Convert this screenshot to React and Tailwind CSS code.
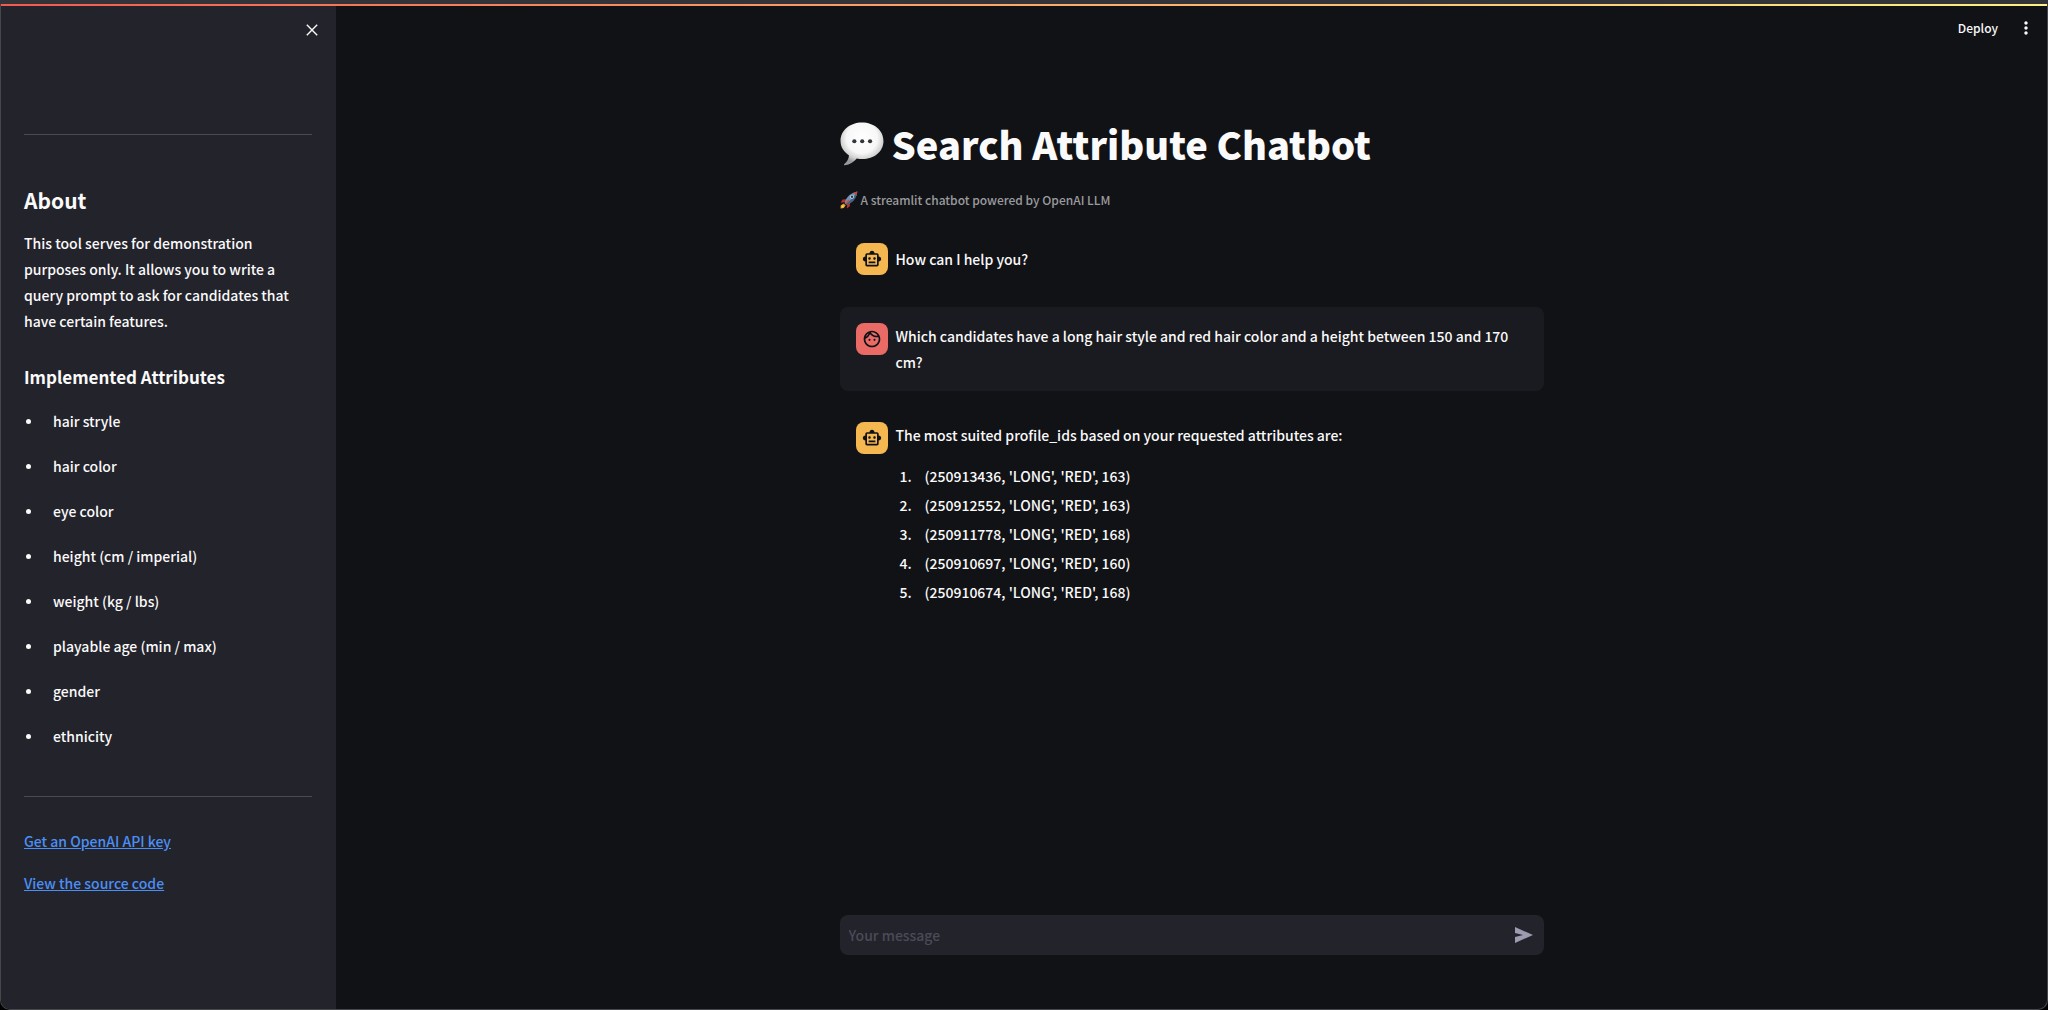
import { MdOutlineSmartToy, MdOutlineFace, MdMoreVert } from "react-icons/md";

const attributes = [
  "hair stryle",
  "hair color",
  "eye color",
  "height (cm / imperial)",
  "weight (kg / lbs)",
  "playable age (min / max)",
  "gender",
  "ethnicity",
];

const results = [
  "(250913436, 'LONG', 'RED', 163)",
  "(250912552, 'LONG', 'RED', 163)",
  "(250911778, 'LONG', 'RED', 168)",
  "(250910697, 'LONG', 'RED', 160)",
  "(250910674, 'LONG', 'RED', 168)",
];

function SpeechBubble() {
  return (
    <svg viewBox="0 0 42 44" preserveAspectRatio="none" className="size-11 shrink-0" aria-hidden="true">
      <defs>
        <radialGradient id="bubble" cx="0.5" cy="0.36" r="0.6">
          <stop offset="0" stopColor="#ffffff" />
          <stop offset="0.6" stopColor="#f7f7f7" />
          <stop offset="0.84" stopColor="#d0d0d0" />
          <stop offset="1" stopColor="#9a9a9a" />
        </radialGradient>
      </defs>
      <path
        d="M21 0.5C32.5 0.5 41.5 8.300 41.500 19C41.500 29.700 32.500 37 21.500 37C19.500 37 17.800 36.800 16 36.400C13 39.800 9.500 42.600 4.600 43.300C3.700 43.400 3.500 42.600 4.200 42C6.700 39.800 8.300 36.800 8.600 33.400C3.800 30 0.500 25.300 0.500 19C0.500 8.300 9.500 0.500 21 0.500Z"
        fill="url(#bubble)"
      />
      <g fill="#333639">
        <circle cx="13.700" cy="19.200" r="2" />
        <circle cx="21.200" cy="19.200" r="2" />
        <circle cx="28.700" cy="19.200" r="2" />
      </g>
    </svg>
  );
}

function Rocket() {
  return (
    <svg viewBox="0 0 18 18" className="size-[18px] shrink-0" aria-hidden="true">
      <path d="M6.500 8.200L2.600 8.400L0.600 11.800L4.700 11Z" fill="#b8322c" />
      <path d="M9.800 11.300L9.900 15.300L6.800 17.500L7.200 13.200Z" fill="#b8322c" />
      <path d="M3.600 12.600L0.700 14.400L0.600 17.500L3.800 17L5.600 14.400Z" fill="#e9a52b" />
      <path d="M3.400 14L1.700 15.200L1.600 16.500L3.200 16.100Z" fill="#fbe36b" />
      <path d="M4.500 12C5.500 7.500 10 1.800 17.300 0.600C17 7.500 11.500 12.300 6.800 13.800Z" fill="#6f93b5" />
      <path d="M5.500 13C9 10.500 14.500 6.500 17.300 0.600C17 7.500 11.500 12.300 6.800 13.800Z" fill="#42607f" />
      <path d="M13.600 1.800C14.800 1.200 16 0.800 17.300 0.600C17.300 1.900 17 3.200 16.500 4.400Z" fill="#c5443c" />
      <circle cx="12" cy="5.800" r="1.900" fill="#d9e2ea" />
      <circle cx="12" cy="5.800" r="1.200" fill="#26384a" />
      <path d="M8.500 8.600L9.500 9.500L5.500 13.400L4.800 12.700Z" fill="#d8493f" />
    </svg>
  );
}

function Assistant({ children }) {
  return (
    <div className="flex size-8 shrink-0 items-center justify-center rounded-lg bg-[#f5b74f] text-[#0e1117]">
      {children}
    </div>
  );
}

export default function App() {
  return (
    <div className="flex min-h-screen flex-col bg-black font-['Noto_Sans_CJK_JP',sans-serif] text-[14px] leading-[26px] font-medium text-[#fafafa]">
      <div className="h-1 bg-[#33343a]" />
      <div className="flex grow flex-col overflow-hidden rounded-b-[10px] border-x border-b border-[#46474c] bg-[#111216]">
        <div className="-mx-px h-0.5 bg-linear-to-r from-[#f15a50] to-[#fbf184]" />
        <div className="flex grow">
          <aside className="flex w-[335px] shrink-0 flex-col bg-[#23232b] pr-6 pl-[23px]">
            <div className="-mr-2 flex h-12 items-center justify-end">
              <button aria-label="Close sidebar" className="flex size-4 items-center justify-center">
                <svg viewBox="0 0 12 12" className="size-3" aria-hidden="true">
                  <path d="M0.800 0.800L11.200 11.200M11.200 0.800L0.800 11.200" stroke="currentColor" strokeWidth="1.400" />
                </svg>
              </button>
            </div>
            <hr className="mt-20 border-[#4b4b51]" />
            <h2 className="mt-[47px] text-[21px] leading-9 font-bold">About</h2>
            <p className="mt-3">
              This tool serves for demonstration purposes only. It allows you to write a query prompt to ask for
              candidates that have certain features.
            </p>
            <h3 className="mt-[27px] text-[17px] leading-8 font-bold">Implemented Attributes</h3>
            <ul className="mt-[15px] flex flex-col gap-[19px]">
              {attributes.map((name) => (
                <li key={name} className="flex items-center gap-[22px] pl-0.5">
                  <span className="size-[5px] rounded-full bg-[#fafafa]" />
                  {name}
                </li>
              ))}
            </ul>
            <hr className="mt-[47px] border-[#4b4b51]" />
            <nav className="mt-[31px] flex flex-col items-start gap-4 text-[#4b8ff5]">
              <a href="#key" className="underline">Get an OpenAI API key</a>
              <a href="#source" className="underline">View the source code</a>
            </nav>
          </aside>
          <div className="flex grow flex-col">
            <header className="flex h-11 items-center justify-end gap-[18px] pr-[11px] text-[12px]">
              <button>Deploy</button>
              <button aria-label="Menu">
                <MdMoreVert className="size-5" />
              </button>
            </header>
            <main className="mx-auto flex w-full max-w-[704px] grow flex-col">
              <h1 className="mt-[68px] flex h-[52px] items-center gap-2 text-[38px] leading-[52px] font-black">
                <SpeechBubble />
                Search Attribute Chatbot
              </h1>
              <p className="mt-[17px] flex items-center gap-[3px] text-[12px] text-[#9a9b9e]">
                <Rocket />
                A streamlit chatbot powered by OpenAI LLM
              </p>
              <section className="mt-[14px] flex flex-col gap-4">
                <article className="flex items-center gap-2 p-4">
                  <Assistant>
                    <MdOutlineSmartToy className="size-5" />
                  </Assistant>
                  <p>How can I help you?</p>
                </article>
                <article className="flex gap-2 rounded-lg bg-[#1a1b20] p-4">
                  <div className="flex size-8 shrink-0 items-center justify-center rounded-lg bg-[#ea6b66] text-[#0e1117]">
                    <MdOutlineFace className="size-5" />
                  </div>
                  <p>
                    Which candidates have a long hair style and red hair color and a height between 150 and 170 cm?
                  </p>
                </article>
                <article className="flex gap-2 px-4 pt-[15px]">
                  <Assistant>
                    <MdOutlineSmartToy className="size-5" />
                  </Assistant>
                  <div>
                    <p>The most suited profile_ids based on your requested attributes are:</p>
                    <ol className="mt-[15px] flex flex-col gap-[3px]">
                      {results.map((row, i) => (
                        <li key={row} className="flex">
                          <span className="w-[29px] pl-1">{i + 1}.</span>
                          {row}
                        </li>
                      ))}
                    </ol>
                  </div>
                </article>
              </section>
              <form className="mt-auto mb-[54px] flex h-10 items-center rounded-lg bg-[#23232b] pr-2 pl-[9px]">
                <input
                  type="text"
                  aria-label="Your message"
                  placeholder="Your message"
                  className="min-w-0 grow bg-transparent outline-none placeholder:text-[#4a4b57]"
                />
                <button type="button" aria-label="Send" className="flex size-6 items-center justify-center text-[#9b9caf]">
                  <svg viewBox="0 0 18 16" className="h-4 w-[18px]" aria-hidden="true">
                    <path d="M0 0L18 8L0 16V10L8 8L0 6Z" fill="currentColor" />
                  </svg>
                </button>
              </form>
            </main>
          </div>
        </div>
      </div>
    </div>
  );
}
